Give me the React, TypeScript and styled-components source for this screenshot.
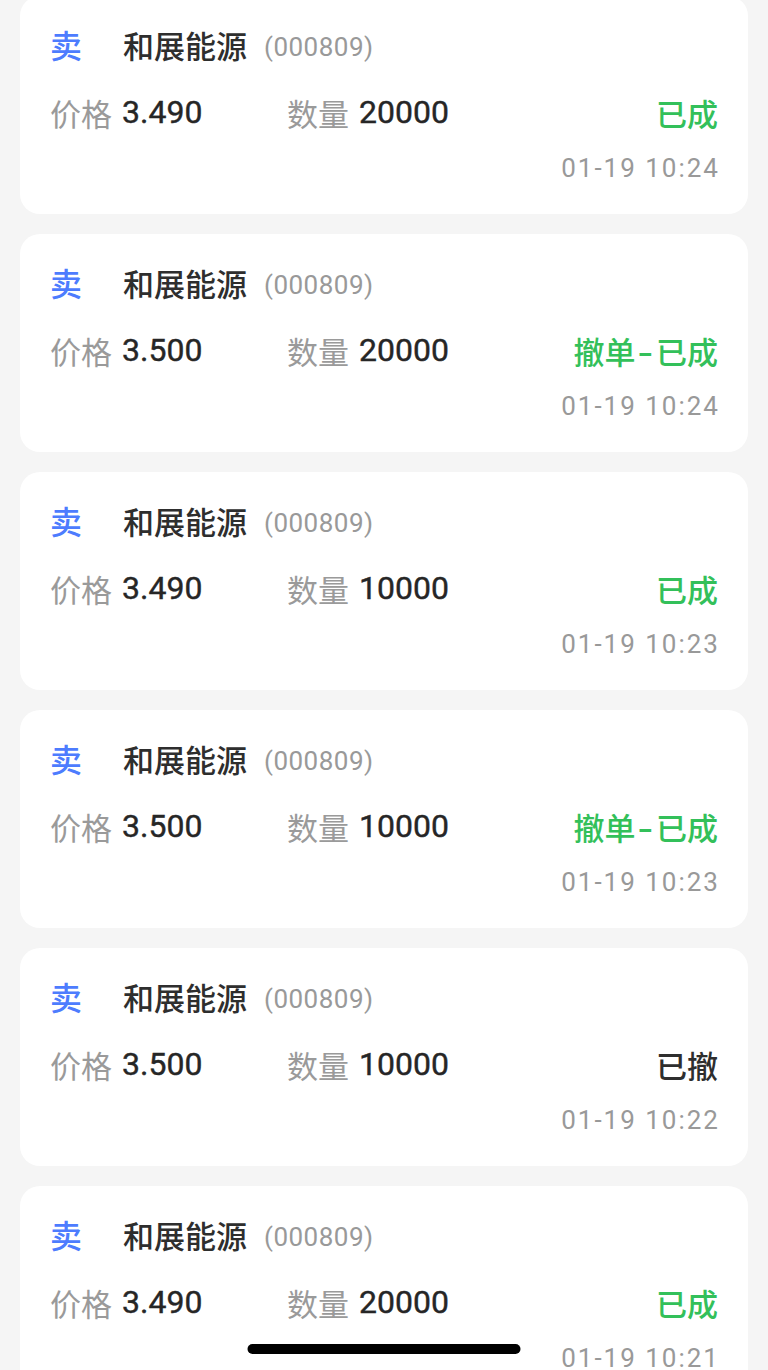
import React from "react";
import styled, { createGlobalStyle } from "styled-components";

const GlobalStyle = createGlobalStyle`
  html, body {
    margin: 0;
    padding: 0;
    background: #f5f5f5;
  }
  body {
    font-family: Roboto, "Noto Sans CJK SC", sans-serif;
    overflow: hidden;
  }
`;

const Page = styled.div`
  display: flex;
  flex-direction: column;
  gap: 20px;
  padding: 0 20px;
  margin-top: -4px;
`;

const Card = styled.div`
  background: #ffffff;
  border-radius: 20px;
  height: 218px;
  box-sizing: border-box;
  padding: 26px 30px 0 30px;
  display: flex;
  flex-direction: column;
`;

const TitleRow = styled.div`
  display: flex;
  align-items: center;
  height: 44px;
`;

const Side = styled.span`
  font-family: "Noto Sans CJK SC", sans-serif;
  font-size: 32px;
  font-weight: 500;
  color: #4d7cfe;
  width: 32px;
  margin-right: 41px;
`;

const Name = styled.span`
  font-family: "Noto Sans CJK SC", sans-serif;
  font-size: 31px;
  font-weight: 500;
  color: #2e2e2e;
`;

const Code = styled.span`
  font-family: Roboto, sans-serif;
  font-size: 26px;
  color: #999999;
  margin-left: 17px;
  padding-top: 5px;
  letter-spacing: 0.5px;
`;

const InfoRow = styled.div`
  display: flex;
  align-items: center;
  height: 44px;
  margin-top: 24px;
`;

const Pair = styled.div<{ $width?: number }>`
  display: flex;
  align-items: center;
  width: ${(p) => (p.$width ? `${p.$width}px` : "auto")};
`;

const Label = styled.span`
  font-family: "Noto Sans CJK SC", sans-serif;
  font-size: 31px;
  color: #9a9a9a;
`;

const Value = styled.span`
  font-family: Roboto, sans-serif;
  font-size: 32px;
  font-weight: 400;
  color: #262626;
  margin-left: 10px;
  -webkit-text-stroke: 0.4px #262626;
`;

const Status = styled.span<{ $tone: "green" | "dark" }>`
  margin-left: auto;
  font-family: "Noto Sans CJK SC", sans-serif;
  font-size: 31px;
  font-weight: 500;
  color: ${(p) => (p.$tone === "green" ? "#33c05a" : "#2e2e2e")};
`;

const Dash = styled.span`
  display: inline-block;
  font-family: Roboto, sans-serif;
  margin: 0 5px;
  transform: scaleX(1.45);
`;

const TimeRow = styled.div`
  display: flex;
  justify-content: flex-end;
  height: 36px;
  align-items: center;
  margin-top: 16px;
`;

const Time = styled.span`
  font-family: Roboto, sans-serif;
  font-size: 26px;
  color: #999999;
  letter-spacing: 2px;
  margin-right: -2px;
`;

const HomeIndicator = styled.div`
  position: fixed;
  left: 50%;
  bottom: 16px;
  transform: translateX(-50%);
  width: 273px;
  height: 10px;
  border-radius: 5px;
  background: #000;
`;

type Order = {
  price: string;
  qty: string;
  status: string;
  tone: "green" | "dark";
  time: string;
};

const orders: Order[] = [
  { price: "3.490", qty: "20000", status: "已成", tone: "green", time: "01-19 10:24" },
  { price: "3.500", qty: "20000", status: "撤单-已成", tone: "green", time: "01-19 10:24" },
  { price: "3.490", qty: "10000", status: "已成", tone: "green", time: "01-19 10:23" },
  { price: "3.500", qty: "10000", status: "撤单-已成", tone: "green", time: "01-19 10:23" },
  { price: "3.500", qty: "10000", status: "已撤", tone: "dark", time: "01-19 10:22" },
  { price: "3.490", qty: "20000", status: "已成", tone: "green", time: "01-19 10:21" },
];

function renderStatus(s: string) {
  const parts = s.split("-");
  if (parts.length === 1) return s;
  return (
    <>
      {parts[0]}
      <Dash>-</Dash>
      {parts[1]}
    </>
  );
}

export default function App() {
  return (
    <>
      <GlobalStyle />
      <Page>
        {orders.map((o, i) => (
          <Card key={i}>
            <TitleRow>
              <Side>卖</Side>
              <Name>和展能源</Name>
              <Code>(000809)</Code>
            </TitleRow>
            <InfoRow>
              <Pair $width={237}>
                <Label>价格</Label>
                <Value>{o.price}</Value>
              </Pair>
              <Pair>
                <Label>数量</Label>
                <Value>{o.qty}</Value>
              </Pair>
              <Status $tone={o.tone}>{renderStatus(o.status)}</Status>
            </InfoRow>
            <TimeRow>
              <Time>{o.time}</Time>
            </TimeRow>
          </Card>
        ))}
      </Page>
      <HomeIndicator />
    </>
  );
}
